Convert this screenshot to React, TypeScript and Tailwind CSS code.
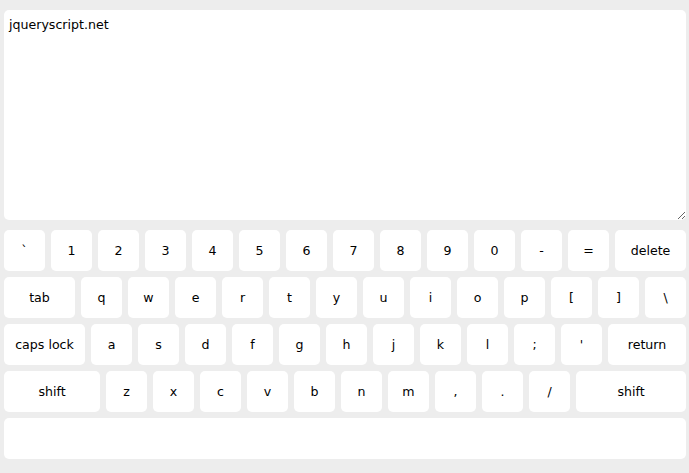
import React from 'react'

type K = { label: string; w?: string }

const rows: K[][] = [
  [
    { label: '`' }, { label: '1' }, { label: '2' }, { label: '3' }, { label: '4' }, { label: '5' },
    { label: '6' }, { label: '7' }, { label: '8' }, { label: '9' }, { label: '0' }, { label: '-' },
    { label: '=' }, { label: 'delete', w: 'flex-1' },
  ],
  [
    { label: 'tab', w: 'w-[71px]' }, { label: 'q' }, { label: 'w' }, { label: 'e' }, { label: 'r' },
    { label: 't' }, { label: 'y' }, { label: 'u' }, { label: 'i' }, { label: 'o' }, { label: 'p' },
    { label: '[' }, { label: ']' }, { label: '\\', w: 'flex-1' },
  ],
  [
    { label: 'caps lock', w: 'w-[81px]' }, { label: 'a' }, { label: 's' }, { label: 'd' }, { label: 'f' },
    { label: 'g' }, { label: 'h' }, { label: 'j' }, { label: 'k' }, { label: 'l' }, { label: ';' },
    { label: "'" }, { label: 'return', w: 'flex-1' },
  ],
  [
    { label: 'shift', w: 'w-[96px]' }, { label: 'z' }, { label: 'x' }, { label: 'c' }, { label: 'v' },
    { label: 'b' }, { label: 'n' }, { label: 'm' }, { label: ',' }, { label: '.' }, { label: '/' },
    { label: 'shift', w: 'flex-1' },
  ],
]

const Key: React.FC<K> = ({ label, w }) => (
  <div
    className={`${w || 'w-[41px]'} h-[41px] shrink-0 rounded-[5px] bg-white flex items-center justify-center pt-[2px] text-[12.6px] text-black`}
  >
    {label}
  </div>
)

export default function App() {
  return (
    <div
      className="w-[689px] h-[473px] bg-[#ededed] pl-[4px] pr-[3px] pt-[10px]"
      style={{ fontFamily: '"DejaVu Sans", Verdana, sans-serif' }}
    >
      <textarea
        defaultValue="jqueryscript.net"
        className="block w-full h-[210px] rounded-[5px] bg-white px-[5px] pt-[6px] pb-[4px] text-[12.6px] text-black outline-none"
        style={{ fontFamily: '"DejaVu Sans", Verdana, sans-serif' }}
      />
      <div className="mt-[10px] flex flex-col gap-[6px]">
        {rows.map((row, i) => (
          <div key={i} className="flex gap-[6px]">
            {row.map((k, j) => (
              <Key key={j} {...k} />
            ))}
          </div>
        ))}
        <div className="h-[41px] rounded-[5px] bg-white" />
      </div>
    </div>
  )
}
